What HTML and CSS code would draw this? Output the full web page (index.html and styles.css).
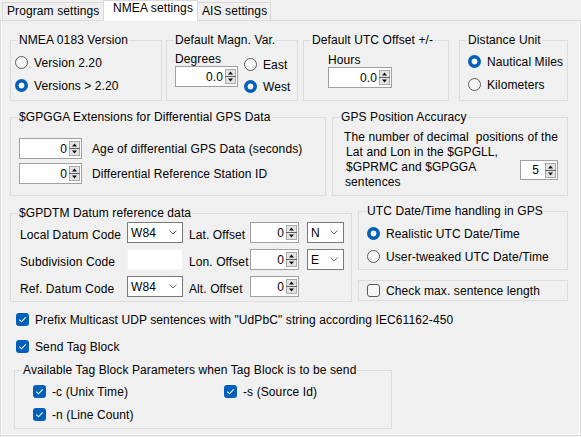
FILE: index.html
```html
<!DOCTYPE html>
<html>
<head>
<meta charset="utf-8">
<link rel="stylesheet" href="styles.css">
</head>
<body>
<div class="tabs">
  <div class="tab tab-prog">Program settings</div>
  <div class="tab tab-nmea active">NMEA settings</div>
  <div class="tab tab-ais">AIS settings</div>
</div>
<div class="tabpanel">
<div class="page">

  <div class="row row1">
    <fieldset class="grp g-ver">
      <legend>NMEA 0183 Version</legend>
      <div class="opts opts-ver">
        <div class="opt"><span class="radio"></span>Version 2.20</div>
        <div class="opt"><span class="radio on"></span>Versions &gt; 2.20</div>
      </div>
    </fieldset>

    <fieldset class="grp g-magn">
      <legend>Default Magn. Var.</legend>
      <div class="magn-body">
        <div class="lblcol lbl-deg">
          <div class="caption cap-deg">Degrees</div>
          <div class="spin spin-deg"><span class="val">0.0</span><svg class="sb" width="11" height="15" viewBox="0 0 11 15"><rect x="0.5" y="0.5" width="10" height="14" fill="#e3e3e3" stroke="#a9a9a9"/><line x1="0" y1="7.5" x2="11" y2="7.5" stroke="#5f5f5f"/><path d="M3 5.5h5l-2.5-3z" fill="#111"/><path d="M3 9.5h5l-2.5 3z" fill="#111"/></svg></div>
        </div>
        <div class="opts opts-magn">
          <div class="opt"><span class="radio"></span>East</div>
          <div class="opt"><span class="radio on"></span>West</div>
        </div>
      </div>
    </fieldset>

    <fieldset class="grp g-utc">
      <legend>Default UTC Offset +/-</legend>
      <div class="lblcol lbl-hours">
        <div class="caption cap-hours">Hours</div>
        <div class="spin spin-hours"><span class="val">0.0</span><svg class="sb" width="11" height="15" viewBox="0 0 11 15"><rect x="0.5" y="0.5" width="10" height="14" fill="#e3e3e3" stroke="#a9a9a9"/><line x1="0" y1="7.5" x2="11" y2="7.5" stroke="#5f5f5f"/><path d="M3 5.5h5l-2.5-3z" fill="#111"/><path d="M3 9.5h5l-2.5 3z" fill="#111"/></svg></div>
      </div>
    </fieldset>

    <fieldset class="grp g-dist">
      <legend>Distance Unit</legend>
      <div class="opts opts-dist">
        <div class="opt"><span class="radio on"></span>Nautical Miles</div>
        <div class="opt"><span class="radio"></span>Kilometers</div>
      </div>
    </fieldset>
  </div>

  <div class="row row2">
    <fieldset class="grp g-gga">
      <legend>$GPGGA Extensions for Differential GPS Data</legend>
      <div class="gga-body">
        <div class="spinrow">
          <div class="spin spin-gga"><span class="val">0</span><svg class="sb" width="11" height="15" viewBox="0 0 11 15"><rect x="0.5" y="0.5" width="10" height="14" fill="#e3e3e3" stroke="#a9a9a9"/><line x1="0" y1="7.5" x2="11" y2="7.5" stroke="#5f5f5f"/><path d="M3 5.5h5l-2.5-3z" fill="#111"/><path d="M3 9.5h5l-2.5 3z" fill="#111"/></svg></div>
          <span class="spinlbl">Age of differential GPS Data (seconds)</span>
        </div>
        <div class="spinrow">
          <div class="spin spin-gga"><span class="val">0</span><svg class="sb" width="11" height="15" viewBox="0 0 11 15"><rect x="0.5" y="0.5" width="10" height="14" fill="#e3e3e3" stroke="#a9a9a9"/><line x1="0" y1="7.5" x2="11" y2="7.5" stroke="#5f5f5f"/><path d="M3 5.5h5l-2.5-3z" fill="#111"/><path d="M3 9.5h5l-2.5 3z" fill="#111"/></svg></div>
          <span class="spinlbl">Differential Reference Station ID</span>
        </div>
      </div>
    </fieldset>

    <fieldset class="grp g-acc">
      <legend>GPS Position Accuracy</legend>
      <div class="acc-body">
        <div class="acc-text">
          <div>The number of decimal&nbsp; positions of the</div>
          <div class="ind">Lat and Lon in the $GPGLL,</div>
          <div class="ind">$GPRMC and $GPGGA</div>
          <div class="ind2">sentences</div>
        </div>
        <div class="spin spin-acc"><span class="val">5</span><svg class="sb" width="11" height="15" viewBox="0 0 11 15"><rect x="0.5" y="0.5" width="10" height="14" fill="#e3e3e3" stroke="#a9a9a9"/><line x1="0" y1="7.5" x2="11" y2="7.5" stroke="#5f5f5f"/><path d="M3 5.5h5l-2.5-3z" fill="#111"/><path d="M3 9.5h5l-2.5 3z" fill="#111"/></svg></div>
      </div>
    </fieldset>
  </div>

  <div class="row row3">
    <fieldset class="grp g-dtm">
      <legend>$GPDTM Datum reference data</legend>
      <div class="dtm-grid">
        <span class="dl">Local Datum Code</span>
        <div class="combo"><span>W84</span><svg width="8" height="5" viewBox="0 0 8 5"><polyline points="0.5,0.5 4,4 7.5,0.5" fill="none" stroke="#6f6f6f"/></svg></div>
        <span class="dl dl2">Lat. Offset</span>
        <div class="spin spin-dtm"><span class="val">0</span><svg class="sb" width="11" height="15" viewBox="0 0 11 15"><rect x="0.5" y="0.5" width="10" height="14" fill="#e3e3e3" stroke="#a9a9a9"/><line x1="0" y1="7.5" x2="11" y2="7.5" stroke="#5f5f5f"/><path d="M3 5.5h5l-2.5-3z" fill="#111"/><path d="M3 9.5h5l-2.5 3z" fill="#111"/></svg></div>
        <div class="combo combo-s"><span>N</span><svg width="8" height="5" viewBox="0 0 8 5"><polyline points="0.5,0.5 4,4 7.5,0.5" fill="none" stroke="#6f6f6f"/></svg></div>

        <span class="dl">Subdivision Code</span>
        <div class="tbox"></div>
        <span class="dl dl2">Lon. Offset</span>
        <div class="spin spin-dtm"><span class="val">0</span><svg class="sb" width="11" height="15" viewBox="0 0 11 15"><rect x="0.5" y="0.5" width="10" height="14" fill="#e3e3e3" stroke="#a9a9a9"/><line x1="0" y1="7.5" x2="11" y2="7.5" stroke="#5f5f5f"/><path d="M3 5.5h5l-2.5-3z" fill="#111"/><path d="M3 9.5h5l-2.5 3z" fill="#111"/></svg></div>
        <div class="combo combo-s"><span>E</span><svg width="8" height="5" viewBox="0 0 8 5"><polyline points="0.5,0.5 4,4 7.5,0.5" fill="none" stroke="#6f6f6f"/></svg></div>

        <span class="dl">Ref. Datum Code</span>
        <div class="combo"><span>W84</span><svg width="8" height="5" viewBox="0 0 8 5"><polyline points="0.5,0.5 4,4 7.5,0.5" fill="none" stroke="#6f6f6f"/></svg></div>
        <span class="dl dl2">Alt. Offset</span>
        <div class="spin spin-dtm"><span class="val">0</span><svg class="sb" width="11" height="15" viewBox="0 0 11 15"><rect x="0.5" y="0.5" width="10" height="14" fill="#e3e3e3" stroke="#a9a9a9"/><line x1="0" y1="7.5" x2="11" y2="7.5" stroke="#5f5f5f"/><path d="M3 5.5h5l-2.5-3z" fill="#111"/><path d="M3 9.5h5l-2.5 3z" fill="#111"/></svg></div>
        <span></span>
      </div>
    </fieldset>

    <div class="rcol">
      <fieldset class="grp g-time">
        <legend>UTC Date/Time handling in GPS</legend>
        <div class="opts opts-time">
          <div class="opt"><span class="radio on"></span>Realistic UTC Date/Time</div>
          <div class="opt"><span class="radio"></span>User-tweaked UTC Date/Time</div>
        </div>
      </fieldset>
      <div class="chkbox-frame">
        <div class="opt"><span class="chk"></span>Check max. sentence length</div>
      </div>
    </div>
  </div>

  <div class="bottom">
    <div class="opt opt-prefix"><span class="chk on"><svg width="13" height="13" viewBox="0 0 13 13"><path d="M3.3 6.6l2.2 2.2 4.2-4.4" fill="none" stroke="#fff" stroke-width="1.1"/></svg></span>Prefix Multicast UDP sentences with "UdPbC" string according IEC61162-450</div>
    <div class="opt opt-send"><span class="chk on"><svg width="13" height="13" viewBox="0 0 13 13"><path d="M3.3 6.6l2.2 2.2 4.2-4.4" fill="none" stroke="#fff" stroke-width="1.1"/></svg></span>Send Tag Block</div>

    <fieldset class="grp g-tag">
      <legend>Available Tag Block Parameters when Tag Block is to be send</legend>
      <div class="tag-grid">
        <div class="opt"><span class="chk on"><svg width="13" height="13" viewBox="0 0 13 13"><path d="M3.3 6.6l2.2 2.2 4.2-4.4" fill="none" stroke="#fff" stroke-width="1.1"/></svg></span>-c (Unix Time)</div>
        <div class="opt"><span class="chk on"><svg width="13" height="13" viewBox="0 0 13 13"><path d="M3.3 6.6l2.2 2.2 4.2-4.4" fill="none" stroke="#fff" stroke-width="1.1"/></svg></span>-s (Source Id)</div>
        <div class="opt"><span class="chk on"><svg width="13" height="13" viewBox="0 0 13 13"><path d="M3.3 6.6l2.2 2.2 4.2-4.4" fill="none" stroke="#fff" stroke-width="1.1"/></svg></span>-n (Line Count)</div>
      </div>
    </fieldset>
  </div>

</div>
</div>
</body>
</html>
```

FILE: styles.css
```css
* { box-sizing: border-box; }
html, body { margin: 0; padding: 0; }
body {
  width: 581px;
  height: 437px;
  overflow: hidden;
  background: #f0f0f0;
  font-family: "Liberation Sans", Arial, sans-serif;
  font-size: 12px;
  letter-spacing: 0.1px;
  color: #000;
}

/* tabs */
.tabs {
  display: flex;
  align-items: flex-start;
  height: 20px;
  padding-left: 2px;
}
.tab {
  margin-top: 2px;
  height: 18px;
  border: 1px solid #d9d9d9;
  border-bottom: none;
  background: #f0f0f0;
  line-height: 16px;
  padding-left: 4px;
  white-space: nowrap;
}
.tab-prog { width: 101px; border-right: none; }
.tab-nmea { width: 95px; }
.tab-ais { width: 73px; border-left: none; }
.tab.active {
  margin-top: 0;
  height: 21px;
  background: #fff;
  position: relative;
  z-index: 1;
  padding-left: 9px;
  line-height: 15px;
}

.tabpanel {
  height: 416px;
  border: 1px solid #dadada;
  background: #fff;
  padding: 0 1px 1px 1px;
}
.page {
  height: 100%;
  background: #f0f0f0;
  padding: 12px 0 0 8px;
}

/* group boxes */
.grp {
  margin: 0;
  padding: 0;
  border: 1px solid #dcdcdc;
  min-width: 0;
}
.grp legend {
  margin-left: 7px;
  padding: 0 1px;
  line-height: 15px;
  white-space: nowrap;
}

.row { display: flex; align-items: flex-start; }

/* options */
.opts { display: flex; flex-direction: column; gap: 6px; }
.opt {
  display: flex;
  align-items: center;
  height: 17px;
  gap: 6px;
  white-space: nowrap;
}
.radio {
  flex: none;
  width: 13px;
  height: 13px;
  border-radius: 50%;
  border: 1px solid #5a5a5a;
  background: #f7f7f7;
}
.radio.on {
  border: none;
  background: radial-gradient(circle, #fff 0 2.6px, #005fb8 3.3px);
}
.chk {
  flex: none;
  width: 13px;
  height: 13px;
  border-radius: 3px;
  border: 1px solid #5a5a5a;
  background: #f7f7f7;
  display: block;
}
.chk.on { border: none; background: #005fb8; }
.chk svg { display: block; }

/* spin */
.spin {
  display: flex;
  align-items: center;
  height: 21px;
  border: 1px solid #a0a0a0;
  background: #fff;
  padding-right: 1px;
}
.spin .val { flex: 1; text-align: right; padding-right: 2px; }
.sb { flex: none; display: block; }

/* row 1 */
.row1 { height: 68px; }
.g-ver { width: 152px; height: 68px; }
.opts-ver { padding: 6px 0 0 4px; }
.g-magn { width: 132px; height: 68px; margin-left: 4px; }
.magn-body { display: flex; align-items: flex-start; padding-left: 8px; }
.lbl-deg { padding-top: 5px; }
.cap-deg { line-height: 13px; }
.spin-deg { width: 63px; }
.opts-magn { padding: 8px 0 0 6px; gap: 5px; }
.g-utc { width: 146px; height: 68px; margin-left: 5px; }
.lbl-hours { padding: 5px 0 0 24px; }
.cap-hours { line-height: 14px; }
.spin-hours { width: 64px; }
.g-dist { width: 109px; height: 68px; margin-left: 10px; }
.opts-dist { padding: 5px 0 0 8px; }

/* row 2 */
.row2 { margin-top: 9px; }
.g-gga { width: 316px; height: 86px; }
.gga-body { display: flex; flex-direction: column; gap: 4px; padding: 13px 0 0 8px; }
.spinrow { display: flex; align-items: center; gap: 10px; }
.spin-gga { width: 63px; }
.g-acc { width: 236px; height: 86px; margin-left: 6px; }
.acc-body { display: grid; padding: 5px 18px 0 11px; }
.acc-text { grid-area: 1 / 1; line-height: 15px; white-space: nowrap; }
.acc-text .ind { padding-left: 2px; }
.acc-text .ind2 { padding-left: 1px; }
.spin-acc {
  grid-area: 1 / 1;
  justify-self: end;
  align-self: start;
  width: 38px;
  height: 20px;
  margin-top: 30px;
}
.spin-acc .val { padding-right: 6px; }

/* row 3 */
.row3 { margin-top: 8px; }
.g-dtm { width: 342px; height: 96px; margin-top: 2px; }
.dtm-grid {
  display: grid;
  grid-template-columns: 107px 56px 67px 49px 45px;
  grid-template-rows: 21px 21px 21px;
  row-gap: 6px;
  padding: 1px 0 0 9px;
}
.dl { align-self: end; line-height: 15px; white-space: nowrap; }
.dl2 { padding-left: 6px; }
.combo {
  display: flex;
  align-items: center;
  justify-content: space-between;
  border: 1px solid #7a7a7a;
  background: #fff;
  padding: 0 5px 0 3px;
}
.combo-s { margin-left: 8px; }
.tbox { background: #fff; border: 1px solid #f4f4f4; }
.spin-dtm { width: 49px; }

.rcol { display: flex; flex-direction: column; margin-left: 6px; width: 210px; }
.g-time { height: 66px; }
.opts-time { padding: 6px 0 0 8px; }
.chkbox-frame {
  margin-top: 10px;
  height: 21px;
  border: 1px solid #dcdcdc;
  padding: 1px 0 0 8px;
}

/* bottom */
.bottom { display: flex; flex-direction: column; align-items: flex-start; }
.opt-prefix { margin: 9px 0 0 6px; }
.opt-send { margin: 10px 0 0 6px; }
.g-tag { width: 378px; height: 66px; margin: 8px 0 0 4px; }
.tag-grid {
  display: grid;
  grid-template-columns: 191px auto;
  row-gap: 6px;
  padding: 5px 0 0 18px;
}
```
